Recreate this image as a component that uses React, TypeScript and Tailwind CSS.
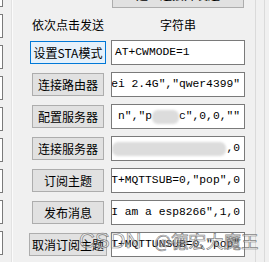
import React from "react";

const mono = "font-['Liberation_Mono','DejaVu_Sans_Mono',monospace] text-[11.3px] text-black";

function Blur({ w }: { w: number }) {
  return (
    <span
      className="inline-block h-[14px] bg-[#dcdcdc] rounded-[6px] blur-[1px] align-middle"
      style={{ width: w }}
    />
  );
}

type Row = {
  label: string;
  bw: string;
  primary?: boolean;
  content: React.ReactNode;
  left?: boolean;
};

const rows: Row[] = [
  { label: "设置STA模式", bw: "w-[76px]", primary: true, left: true, content: "AT+CWMODE=1" },
  { label: "连接路由器", bw: "w-[72px]", content: 'ei 2.4G","qwer4399"' },
  {
    label: "配置服务器",
    bw: "w-[72px]",
    content: (
      <>
        <span>{'n","p'}</span>
        <Blur w={27} />
        <span>{'c",0,0,""'}</span>
      </>
    ),
  },
  {
    label: "连接服务器",
    bw: "w-[72px]",
    content: (
      <>
        <Blur w={116} />
        <span>,0</span>
      </>
    ),
  },
  { label: "订阅主题", bw: "w-[72px]", content: 'T+MQTTSUB=0,"pop",0' },
  { label: "发布消息", bw: "w-[72px]", content: 'I am a esp8266",1,0' },
  { label: "取消订阅主题", bw: "w-[78px]", content: 'T+MQTTUNSUB=0,"pop"' },
];

export default function App() {
  return (
    <div className="relative w-[269px] h-[262px] bg-[#f0f0f0] flex overflow-hidden font-['Noto_Sans_CJK_SC','Noto_Sans',sans-serif] text-[12px] text-black">
      {/* left strip */}
      <div className="w-[3px] flex flex-col shrink-0">
        <div className="h-[7px] bg-white border-r border-b border-[#7a7a7a]" />
        <div className="mt-[7px] flex flex-col gap-[7px]">
          {Array.from({ length: 8 }).map((_, i) => (
            <div key={i} className="h-[24px] bg-white border-r border-y border-[#7a7a7a]" />
          ))}
        </div>
      </div>
      <div className="w-[8px] shrink-0" />
      <div className="w-px bg-[#e2e2e2] shrink-0" />
      <div className="w-px bg-[#fbfbfb] shrink-0" />

      {/* main */}
      <div className="w-[242px] shrink-0 flex flex-col">
        <div className="ml-[99px] w-[132px] h-[8px] bg-[#e1e1e1] border-x border-b border-[#adadad] overflow-hidden flex justify-center">
          <span className="leading-[16px] mt-[-13px] whitespace-nowrap">建立连接并发送</span>
        </div>
        <div className="h-[32px] flex pt-[9px]">
          <div className="ml-[16px] w-[78px] text-center leading-[16px]">依次点击发送</div>
          <div className="ml-[4px] w-[134px] text-center leading-[16px]">字符串</div>
        </div>
        <div className="flex flex-col gap-[7px]">
          {rows.map((r, i) => (
            <div key={i} className="h-[25px] flex items-center">
              <div className="ml-[16px] w-[78px] flex justify-center">
                <div
                  className={`${r.bw} h-[23px] flex items-center justify-center border whitespace-nowrap leading-[16px] ${
                    r.primary ? "bg-[#e5f1fb] border-[#0078d7]" : "bg-[#e1e1e1] border-[#adadad]"
                  }`}
                >
                  {r.label}
                </div>
              </div>
              <div
                className={`ml-[4px] w-[134px] h-[25px] bg-white border border-[#7a7a7a] overflow-hidden flex items-center whitespace-pre ${mono} ${
                  r.left ? "justify-start pl-[3px]" : "justify-end pr-[4px]"
                }`}
              >
                {r.content}
              </div>
            </div>
          ))}
        </div>
      </div>

      {/* right strip */}
      <div className="w-px bg-[#dadada] shrink-0" />
      <div className="w-[8px] shrink-0" />
      <div className="w-px bg-[#dadada] shrink-0" />
      <div className="flex-1" />

      {/* watermark */}
      <div className="absolute left-[79px] top-[227px] flex items-center whitespace-nowrap text-[rgba(255,255,255,0.4)] [-webkit-text-stroke:0.7px_rgba(100,100,100,0.8)] pointer-events-none">
        <span className="text-[22px] leading-[28px] font-['Liberation_Sans',sans-serif]">CSDN</span>
        <span className="ml-[13px] text-[17.5px] leading-[28px]">@德宏大魔王</span>
      </div>
    </div>
  );
}
